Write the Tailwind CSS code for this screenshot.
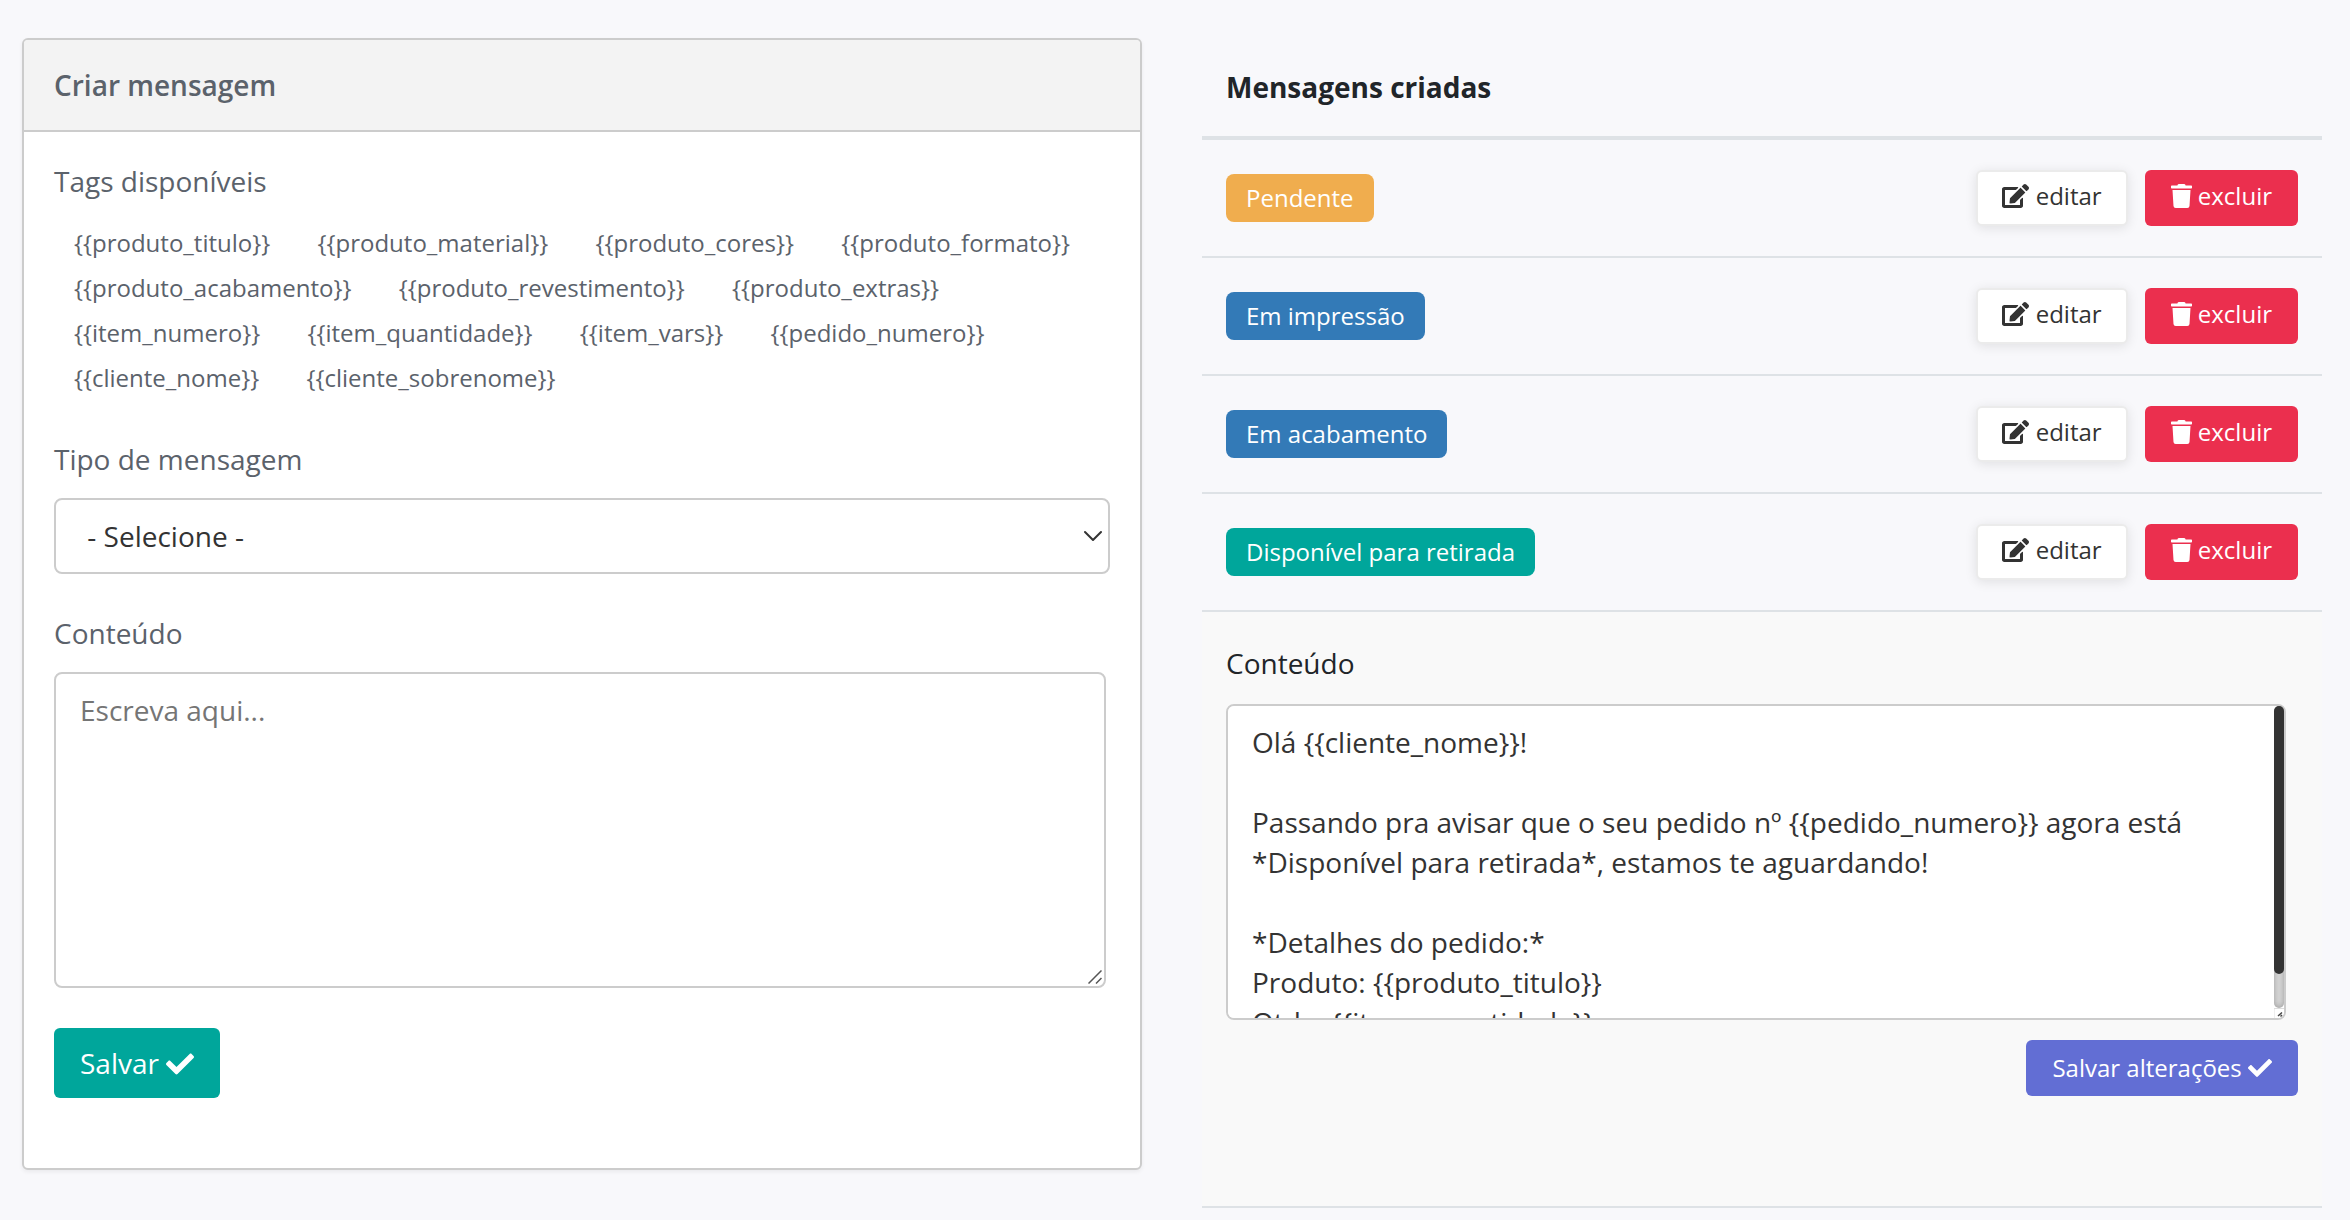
<!DOCTYPE html>
<html lang="pt-BR">
<head>
<meta charset="utf-8">
<meta name="viewport" content="width=device-width, initial-scale=1">
<title>Mensagens</title>
<script src="https://cdn.jsdelivr.net/npm/@tailwindcss/browser@4"></script>
</head>
<body class="min-h-screen bg-[#f8f8fb] font-['Open_Sans','Noto_Sans',sans-serif] text-[28px] leading-[42px] text-[#212529]">

<svg class="hidden" aria-hidden="true">
  <symbol id="i-check" viewBox="0 0 512 512"><path d="M173.898 439.404l-166.4-166.4c-9.997-9.997-9.997-26.206 0-36.204l36.203-36.204c9.997-9.998 26.207-9.998 36.204 0L192 312.69 432.095 72.596c9.997-9.997 26.207-9.997 36.204 0l36.203 36.204c9.997 9.997 9.997 26.206 0 36.204l-294.4 294.401c-9.998 9.997-26.207 9.997-36.204-.001z"/></symbol>
  <symbol id="i-edit" viewBox="0 0 576 512"><path d="M402.6 83.2l90.2 90.2c3.8 3.8 3.8 10 0 13.8L274.4 405.6l-92.8 10.3c-12.4 1.4-22.9-9.1-21.5-21.5l10.3-92.8L388.8 83.2c3.8-3.8 10-3.8 13.8 0zm162-22.9l-48.8-48.8c-15.2-15.2-39.9-15.2-55.2 0l-35.4 35.4c-3.8 3.8-3.8 10 0 13.8l90.2 90.2c3.8 3.8 10 3.8 13.8 0l35.4-35.4c15.2-15.3 15.2-40 0-55.2zM384 346.2V448H64V128h229.8c3.2 0 6.2-1.3 8.5-3.5l40-40c7.6-7.6 2.2-20.5-8.5-20.5H48C21.5 64 0 85.5 0 112v352c0 26.5 21.5 48 48 48h352c26.5 0 48-21.5 48-48V306.2c0-10.7-12.9-16-20.5-8.5l-40 40c-2.2 2.3-3.5 5.3-3.5 8.5z"/></symbol>
  <symbol id="i-trash" viewBox="0 0 448 512"><path d="M432 32H312l-9.4-18.7A24 24 0 0 0 281.1 0H166.8a23.72 23.72 0 0 0-21.4 13.3L136 32H16A16 16 0 0 0 0 48v32a16 16 0 0 0 16 16h416a16 16 0 0 0 16-16V48a16 16 0 0 0-16-16zM53.2 467a48 48 0 0 0 47.9 45h245.8a48 48 0 0 0 47.9-45L416 128H32z"/></symbol>
</svg>

<main class="grid grid-cols-2 items-start gap-[60px] pt-[38px] pr-7 pb-3 pl-[22px]">

  <section class="overflow-hidden rounded-md border-2 border-[#ccc] bg-white text-[#5b626b] shadow-[0_2px_4px_rgba(0,0,0,0.06)]">
    <h2 class="border-b-2 border-[#ccc] bg-[#f3f3f3] px-[30px] py-6 font-semibold">Criar mensagem</h2>
    <form class="px-[30px] pt-7 pb-[70px]">
      <h3>Tags disponíveis</h3>
      <div class="mt-[18px] leading-[45px]">
        <span class="inline-block px-5 align-top text-2xl leading-[45px]">{{produto_titulo}}</span>
        <span class="inline-block px-5 align-top text-2xl leading-[45px]">{{produto_material}}</span>
        <span class="inline-block px-5 align-top text-2xl leading-[45px]">{{produto_cores}}</span>
        <span class="inline-block px-5 align-top text-2xl leading-[45px]">{{produto_formato}}</span>
        <span class="inline-block px-5 align-top text-2xl leading-[45px]">{{produto_acabamento}}</span>
        <span class="inline-block px-5 align-top text-2xl leading-[45px]">{{produto_revestimento}}</span>
        <span class="inline-block px-5 align-top text-2xl leading-[45px]">{{produto_extras}}</span>
        <span class="inline-block px-5 align-top text-2xl leading-[45px]">{{item_numero}}</span>
        <span class="inline-block px-5 align-top text-2xl leading-[45px]">{{item_quantidade}}</span>
        <span class="inline-block px-5 align-top text-2xl leading-[45px]">{{item_vars}}</span>
        <span class="inline-block px-5 align-top text-2xl leading-[45px]">{{pedido_numero}}</span>
        <span class="inline-block px-5 align-top text-2xl leading-[45px]">{{cliente_nome}}</span>
        <span class="inline-block px-5 align-top text-2xl leading-[45px]">{{cliente_sobrenome}}</span>
      </div>

      <label for="tipo" class="mt-[38px] block">Tipo de mensagem</label>
      <div class="relative mt-[18px]">
        <select id="tipo" class="block h-[76px] w-full appearance-none rounded-lg border-2 border-[#ccc] bg-white pr-12 pl-6 text-[#333]">
          <option>&nbsp;- Selecione -</option>
        </select>
        <svg class="pointer-events-none absolute top-8 right-2 h-3 w-[18px]" viewBox="0 0 18 12" fill="none" stroke="#333" stroke-width="2" stroke-linecap="round" stroke-linejoin="round" aria-hidden="true"><path d="M1 2l8 8 8-8"/></svg>
      </div>

      <label for="conteudo" class="mt-[38px] block">Conteúdo</label>
      <div class="relative mt-[18px] mr-1">
        <textarea id="conteudo" placeholder="Escreva aqui..." class="block h-[316px] w-full resize-none rounded-lg border-2 border-[#ccc] bg-white px-6 py-4 leading-10 text-[#333] placeholder:text-[#757575]"></textarea>
        <svg class="pointer-events-none absolute right-1 bottom-1 size-[14px]" viewBox="0 0 14 14" fill="none" stroke="#555" stroke-width="1.5" aria-hidden="true"><path d="M.5 13.5l13-13M8 13.5L13.5 8"/></svg>
      </div>

      <button type="button" class="mt-10 block h-[70px] rounded-md bg-[#00a69b] px-[26px] text-white">Salvar <svg class="inline-block size-7 align-[-4px]" fill="currentColor" aria-hidden="true"><use href="#i-check"/></svg></button>
    </form>
  </section>

  <table class="w-full border-separate border-spacing-0 text-left">
    <thead>
      <tr><th colspan="2" class="border-b-4 border-[#dee2e6] px-6 py-7 font-bold">Mensagens criadas</th></tr>
    </thead>
    <tbody>
      <tr class="h-[118px]">
        <td class="border-b-2 border-[#dee2e6] px-6 text-2xl"><span class="flex h-12 w-fit items-center rounded-lg bg-[#f0ad4e] px-5 text-white">Pendente</span></td>
        <td class="border-b-2 border-[#dee2e6] px-6 text-2xl">
          <div class="flex justify-end gap-[17px]">
            <button type="button" class="h-14 rounded-md border-2 border-[#ebebeb] bg-white px-6 pb-1 text-[#333] shadow-[0_2px_12px_rgba(0,0,0,0.1)]"><svg class="inline-block h-6 w-[27px] align-[-3px]" fill="currentColor" aria-hidden="true"><use href="#i-edit"/></svg> editar</button>
            <button type="button" class="h-14 rounded-md bg-[#eb2f4e] px-[26px] pb-1 text-white"><svg class="inline-block h-6 w-[21px] align-[-3px]" fill="currentColor" aria-hidden="true"><use href="#i-trash"/></svg> excluir</button>
          </div>
        </td>
      </tr>
      <tr class="h-[118px]">
        <td class="border-b-2 border-[#dee2e6] px-6 text-2xl"><span class="flex h-12 w-fit items-center rounded-lg bg-[#337ab7] px-5 text-white">Em impressão</span></td>
        <td class="border-b-2 border-[#dee2e6] px-6 text-2xl">
          <div class="flex justify-end gap-[17px]">
            <button type="button" class="h-14 rounded-md border-2 border-[#ebebeb] bg-white px-6 pb-1 text-[#333] shadow-[0_2px_12px_rgba(0,0,0,0.1)]"><svg class="inline-block h-6 w-[27px] align-[-3px]" fill="currentColor" aria-hidden="true"><use href="#i-edit"/></svg> editar</button>
            <button type="button" class="h-14 rounded-md bg-[#eb2f4e] px-[26px] pb-1 text-white"><svg class="inline-block h-6 w-[21px] align-[-3px]" fill="currentColor" aria-hidden="true"><use href="#i-trash"/></svg> excluir</button>
          </div>
        </td>
      </tr>
      <tr class="h-[118px]">
        <td class="border-b-2 border-[#dee2e6] px-6 text-2xl"><span class="flex h-12 w-fit items-center rounded-lg bg-[#337ab7] px-5 text-white">Em acabamento</span></td>
        <td class="border-b-2 border-[#dee2e6] px-6 text-2xl">
          <div class="flex justify-end gap-[17px]">
            <button type="button" class="h-14 rounded-md border-2 border-[#ebebeb] bg-white px-6 pb-1 text-[#333] shadow-[0_2px_12px_rgba(0,0,0,0.1)]"><svg class="inline-block h-6 w-[27px] align-[-3px]" fill="currentColor" aria-hidden="true"><use href="#i-edit"/></svg> editar</button>
            <button type="button" class="h-14 rounded-md bg-[#eb2f4e] px-[26px] pb-1 text-white"><svg class="inline-block h-6 w-[21px] align-[-3px]" fill="currentColor" aria-hidden="true"><use href="#i-trash"/></svg> excluir</button>
          </div>
        </td>
      </tr>
      <tr class="h-[118px]">
        <td class="border-b-2 border-[#dee2e6] px-6 text-2xl"><span class="flex h-12 w-fit items-center rounded-lg bg-[#00a69b] px-5 text-white">Disponível para retirada</span></td>
        <td class="border-b-2 border-[#dee2e6] px-6 text-2xl">
          <div class="flex justify-end gap-[17px]">
            <button type="button" class="h-14 rounded-md border-2 border-[#ebebeb] bg-white px-6 pb-1 text-[#333] shadow-[0_2px_12px_rgba(0,0,0,0.1)]"><svg class="inline-block h-6 w-[27px] align-[-3px]" fill="currentColor" aria-hidden="true"><use href="#i-edit"/></svg> editar</button>
            <button type="button" class="h-14 rounded-md bg-[#eb2f4e] px-[26px] pb-1 text-white"><svg class="inline-block h-6 w-[21px] align-[-3px]" fill="currentColor" aria-hidden="true"><use href="#i-trash"/></svg> excluir</button>
          </div>
        </td>
      </tr>
      <tr class="bg-[#f9f9f9]">
        <td colspan="2" class="border-b-2 border-[#dee2e6] px-6 pt-[30px] pb-[110px]">
          <label for="mensagem" class="block">Conteúdo</label>
          <div class="relative mt-5 mr-3">
            <textarea id="mensagem" class="block h-[316px] w-full resize-none rounded-lg border-2 border-[#ccc] bg-white px-6 py-4 leading-10 text-[#333] [scrollbar-width:none]">Olá {{cliente_nome}}!

Passando pra avisar que o seu pedido nº {{pedido_numero}} agora está *Disponível para retirada*, estamos te aguardando!

*Detalhes do pedido:*
Produto: {{produto_titulo}}
Qtde: {{item_quantidade}}</textarea>
            <!-- scrollbar: track with thumb, then the resize corner -->
            <div class="pointer-events-none absolute inset-y-[2px] right-[2px] flex w-[10px] flex-col" aria-hidden="true">
              <div class="flex-1 rounded-[5px] bg-[#d9d9d9] shadow-[inset_0_0_6px_rgba(0,0,0,0.3)]">
                <div class="h-[268px] rounded-[5px] bg-[#333]"></div>
              </div>
              <svg class="size-[10px]" viewBox="0 0 10 10" fill="none" stroke-width="1.5"><path d="M0 10V.5h10" stroke="#ddd" stroke-width="1"/><path d="M4 8l4-3.500M6.500 8.500L8 7" stroke="#444"/></svg>
            </div>
          </div>
          <button type="button" class="mt-5 ml-auto block h-14 rounded-md bg-[#626ed4] px-[26px] text-2xl text-white">Salvar alterações <svg class="inline-block size-6 align-[-3px]" fill="currentColor" aria-hidden="true"><use href="#i-check"/></svg></button>
        </td>
      </tr>
    </tbody>
  </table>
</main>
</body>
</html>
